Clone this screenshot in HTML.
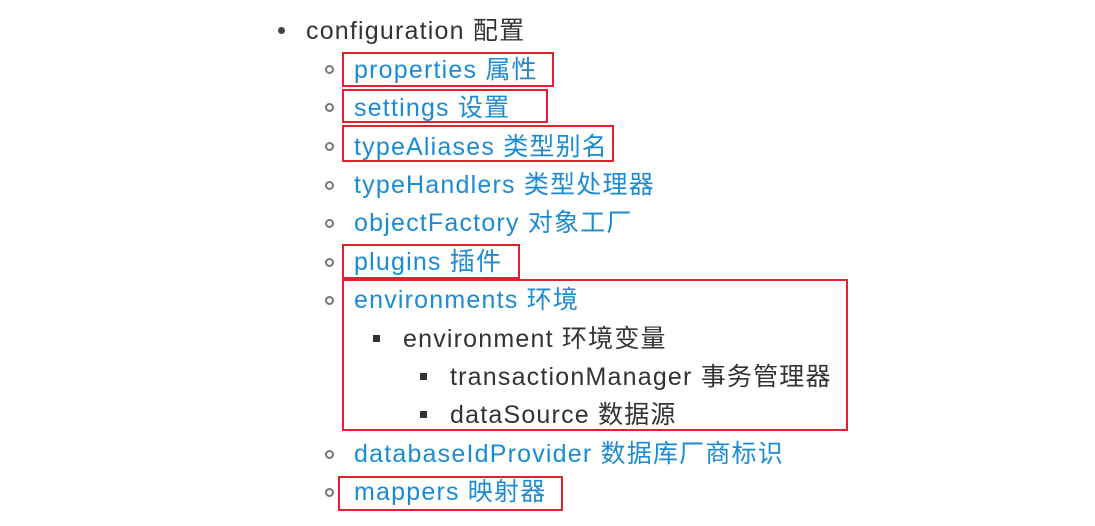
<!DOCTYPE html>
<html><head><meta charset="utf-8"><style>
body{margin:0;width:1095px;height:526px;background:#fff;position:relative;overflow:hidden;font-family:"Liberation Sans","Noto Sans CJK SC",sans-serif;font-size:25px;letter-spacing:1.2px}
.t{position:absolute;white-space:nowrap;line-height:30px}
.b{color:#1b8bd4}.g{color:#333}
.disc{position:absolute;width:7px;height:7px;border-radius:50%;background:#444}
.circ{position:absolute;width:5px;height:5px;border-radius:50%;border:2px solid #777}
.sq{position:absolute;width:7px;height:7px;background:#333}
.r{position:absolute;border:2.5px solid #e3202b;box-sizing:border-box}
</style></head><body>
<div class="disc" style="left:278px;top:27px"></div><div class="t g" style="left:306px;top:16px">configuration 配置</div>
<div class="circ" style="left:325px;top:65px"></div><div class="t b" style="left:354px;top:55px">properties 属性</div>
<div class="circ" style="left:325px;top:103px"></div><div class="t b" style="left:354px;top:93px">settings 设置</div>
<div class="circ" style="left:325px;top:142px"></div><div class="t b" style="left:354px;top:132px">typeAliases 类型别名</div>
<div class="circ" style="left:325px;top:181px"></div><div class="t b" style="left:354px;top:170px">typeHandlers 类型处理器</div>
<div class="circ" style="left:325px;top:219px"></div><div class="t b" style="left:354px;top:208px">objectFactory 对象工厂</div>
<div class="circ" style="left:325px;top:258px"></div><div class="t b" style="left:354px;top:247px">plugins 插件</div>
<div class="circ" style="left:325px;top:296px"></div><div class="t b" style="left:354px;top:285px">environments 环境</div>
<div class="sq" style="left:373px;top:335px"></div><div class="t g" style="left:403px;top:324px">environment 环境变量</div>
<div class="sq" style="left:420px;top:373px"></div><div class="t g" style="left:450px;top:362px">transactionManager 事务管理器</div>
<div class="sq" style="left:420px;top:411px"></div><div class="t g" style="left:450px;top:400px">dataSource 数据源</div>
<div class="circ" style="left:325px;top:450px"></div><div class="t b" style="left:354px;top:439px">databaseIdProvider 数据库厂商标识</div>
<div class="circ" style="left:325px;top:488px"></div><div class="t b" style="left:354px;top:477px">mappers 映射器</div>
<div class="r" style="left:342px;top:52px;width:212px;height:35px"></div>
<div class="r" style="left:342px;top:89px;width:206px;height:34px"></div>
<div class="r" style="left:342px;top:125px;width:272px;height:37px"></div>
<div class="r" style="left:342px;top:244px;width:178px;height:35px"></div>
<div class="r" style="left:342px;top:279px;width:506px;height:152px"></div>
<div class="r" style="left:338px;top:476px;width:225px;height:35px"></div>
</body></html>
